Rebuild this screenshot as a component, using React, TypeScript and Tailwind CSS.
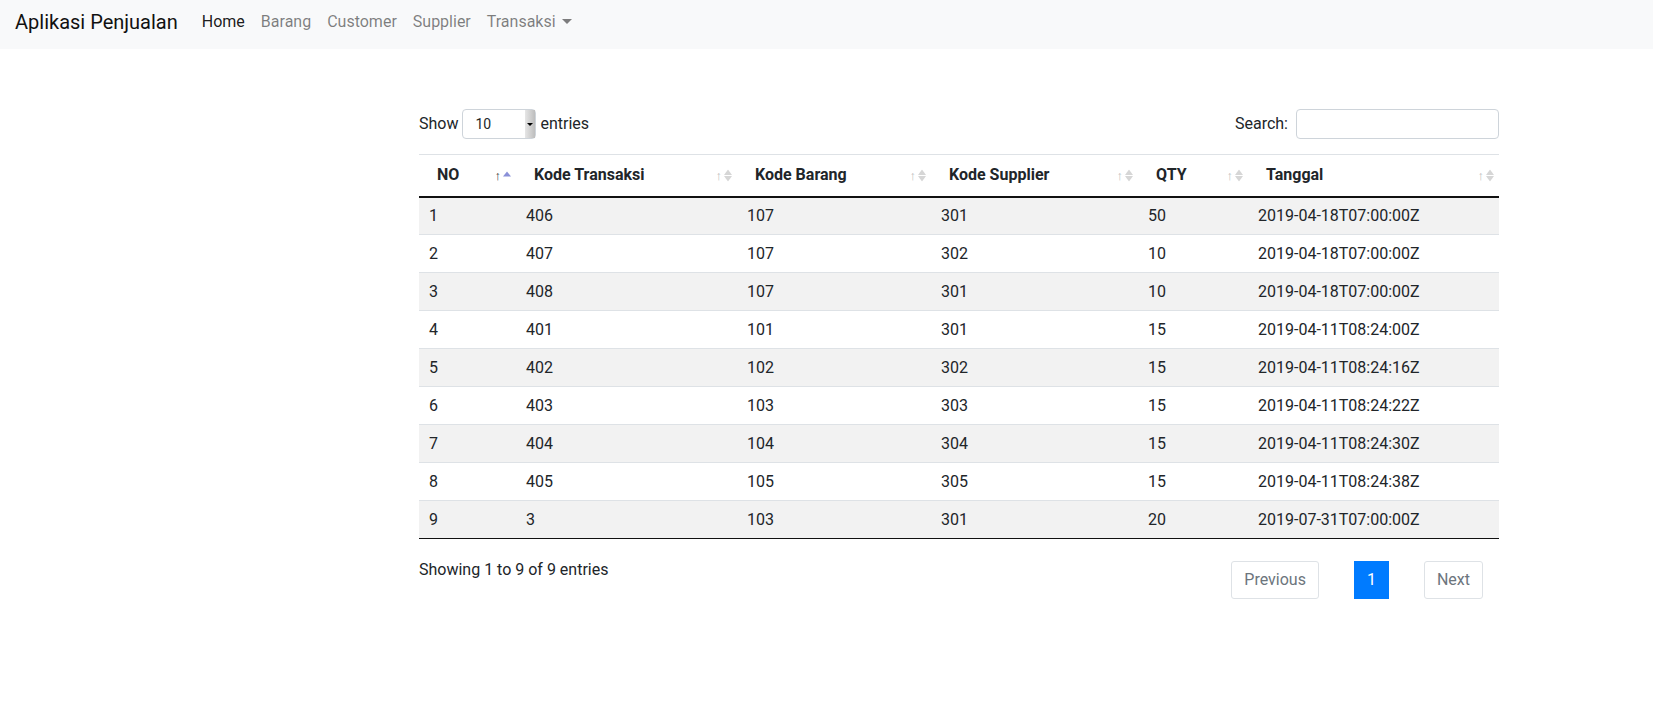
import React from "react";

const rows: [number, number, number, number, number, string][] = [
  [1, 406, 107, 301, 50, "2019-04-18T07:00:00Z"],
  [2, 407, 107, 302, 10, "2019-04-18T07:00:00Z"],
  [3, 408, 107, 301, 10, "2019-04-18T07:00:00Z"],
  [4, 401, 101, 301, 15, "2019-04-11T08:24:00Z"],
  [5, 402, 102, 302, 15, "2019-04-11T08:24:16Z"],
  [6, 403, 103, 303, 15, "2019-04-11T08:24:22Z"],
  [7, 404, 104, 304, 15, "2019-04-11T08:24:30Z"],
  [8, 405, 105, 305, 15, "2019-04-11T08:24:38Z"],
  [9, 3, 103, 301, 20, "2019-07-31T07:00:00Z"],
];

const columns = [
  { label: "NO", width: "w-[97px]" },
  { label: "Kode Transaksi", width: "w-[221px]" },
  { label: "Kode Barang", width: "w-[194px]" },
  { label: "Kode Supplier", width: "w-[207px]" },
  { label: "QTY", width: "w-[110px]" },
  { label: "Tanggal", width: "w-[251px]" },
];

function SortIcon({ active }: { active: boolean }) {
  return (
    <span className="absolute right-[5px] top-1/2 -translate-y-1/2 flex items-center gap-[2px]">
      <span className={`text-[13px] leading-none ${active ? "text-[#333]" : "text-[#bdbdbd]"}`}>↑</span>
      {active ? (
        <svg width="8" height="12" viewBox="0 0 8 12">
          <path d="M4 2 L8 7 L0 7 Z" fill="#8a90d8" />
        </svg>
      ) : (
        <svg width="8" height="12" viewBox="0 0 8 12">
          <path d="M4 0 L8 5.5 L0 5.5 Z" fill="#d6d6d6" />
          <path d="M4 12 L8 6.5 L0 6.5 Z" fill="#d6d6d6" />
        </svg>
      )}
    </span>
  );
}

export default function App() {
  const links = ["Home", "Barang", "Customer", "Supplier"];
  return (
    <div className="min-h-screen bg-white font-['Roboto','Liberation_Sans',sans-serif] text-[16px] text-[#212529]">
      <nav className="h-[49px] bg-[#f8f9fa] flex items-center px-[15px] pb-[6px]">
        <span className="text-[20px] text-[#111] mr-[16px]">Aplikasi Penjualan</span>
        <ul className="flex items-center">
          {links.map((l, i) => (
            <li key={l}>
              <a className={`px-2 ${i === 0 ? "text-black/90" : "text-black/50"}`}>{l}</a>
            </li>
          ))}
          <li className="flex items-center px-2 text-black/50">
            Transaksi
            <span className="ml-[6px] w-0 h-0 border-l-[5px] border-r-[5px] border-t-[5px] border-l-transparent border-r-transparent border-t-black/50" />
          </li>
        </ul>
      </nav>

      <main className="ml-[419px] w-[1080px] pt-[60px]">
        <div className="flex items-center justify-between h-[30px]">
          <div className="flex items-center gap-[4px]">
            <span>Show</span>
            <div className="relative w-[74px] h-[30px] border border-[#ced4da] rounded-[4px] flex items-center pl-[12px] text-[14px]">
              10
              <span className="absolute right-0 top-0 bottom-0 w-[10px] bg-gradient-to-r from-[#e6e6e6] to-[#bdbdbd] flex items-center justify-center">
                <span className="w-0 h-0 border-l-[3px] border-r-[3px] border-t-[3px] border-l-transparent border-r-transparent border-t-black" />
              </span>
            </div>
            <span>entries</span>
          </div>
          <div className="flex items-center gap-[8px]">
            <span>Search:</span>
            <input className="w-[203px] h-[30px] border border-[#ced4da] rounded-[4px] outline-none" />
          </div>
        </div>

        <table className="mt-[15px] w-full table-fixed border-collapse">
          <thead>
            <tr>
              {columns.map((c, i) => (
                <th
                  key={c.label}
                  className={`${c.width} relative h-[42px] text-left font-bold pl-[18px] border-t border-[#dee2e6] border-b-2 border-b-[#111]`}
                >
                  {c.label}
                  <SortIcon active={i === 0} />
                </th>
              ))}
            </tr>
          </thead>
          <tbody>
            {rows.map((r, i) => (
              <tr key={i} className={i % 2 === 0 ? "bg-[#f2f2f2]" : "bg-white"}>
                {r.map((v, j) => (
                  <td key={j} className={`h-[38px] pl-[10px] ${i > 0 ? "border-t border-[#dee2e6]" : ""} ${i === rows.length - 1 ? "border-b border-b-[#111]" : ""}`}>
                    {v}
                  </td>
                ))}
              </tr>
            ))}
          </tbody>
        </table>

        <div className="flex items-start justify-between mt-[19px]">
          <div>Showing 1 to 9 of 9 entries</div>
          <div className="flex items-center gap-[35px] mr-[16px] mt-[3px]">
            <span className="h-[38px] px-[12px] flex items-center border border-[#dee2e6] rounded-[3px] text-[#6c757d]">Previous</span>
            <span className="h-[38px] w-[35px] flex items-center justify-center bg-[#007bff] text-white">1</span>
            <span className="h-[38px] px-[12px] flex items-center border border-[#dee2e6] rounded-[3px] text-[#6c757d]">Next</span>
          </div>
        </div>
      </main>
    </div>
  );
}
